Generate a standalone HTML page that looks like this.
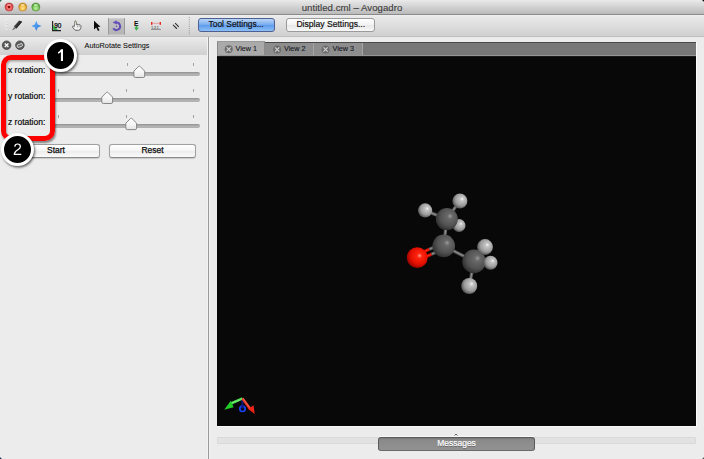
<!DOCTYPE html>
<html><head><meta charset="utf-8">
<style>
*{margin:0;padding:0;box-sizing:border-box}
html,body{width:704px;height:459px;overflow:hidden;background:#ececec;font-family:"Liberation Sans",sans-serif}
.a{position:absolute}
svg{position:absolute;overflow:visible}
#title{left:0;top:0;width:704px;height:15px;background:linear-gradient(#ececec 0,#e6e6e6 1px,#bababa 14px);border-bottom:1px solid #8a8a8a}
#ttxt{left:0;top:2px;width:704px;text-align:center;font-size:9.6px;color:#3e3e3e;line-height:11px;letter-spacing:.05px;-webkit-text-stroke:.15px #3e3e3e}
.tl{top:3px;width:9px;height:9px;border-radius:50%}
#toolbar{left:0;top:15px;width:704px;height:22px;background:linear-gradient(#f2f2f2 0,#eaeaea 1px,#d0d0d0 21px);border-bottom:1px solid #bfbfbf}
.btn{font-size:9.2px;text-align:center;line-height:11px;border-radius:3px;-webkit-text-stroke:.2px #111}
.btn span{display:inline-block;transform:scaleX(.915)}
#toolset{left:198px;top:18px;width:77px;height:14px;border:1px solid #4e5f91;background:linear-gradient(#b9d5f6,#76aaee 50%,#5d9bec 51%,#8cc0f5);color:#111}
#dispset{left:286px;top:18px;width:89px;height:14px;border:1px solid #9a9a9a;background:linear-gradient(#ffffff,#f2f2f2 50%,#e8e8e8 51%,#f8f8f8);color:#111}
#left{left:0;top:37px;width:208px;height:422px;background:#ececec}
#phead{left:0;top:37px;width:208px;height:18px;background:linear-gradient(#ebebeb,#d0d0d0)}
#phtxt{left:22px;top:41px;width:190px;text-align:center;font-size:7.3px;color:#0a0a0a;line-height:9px;-webkit-text-stroke:.05px #0a0a0a}
#vsep{left:207px;top:37px;width:3px;height:422px;background:linear-gradient(90deg,#f3f3f3 0 1px,#999 1px 2px,#f3f3f3 2px)}
.lbl{left:8px;font-size:8.5px;color:#0a0a0a;line-height:10px;-webkit-text-stroke:.2px #0a0a0a}
.groove{left:53px;width:147px;height:4px;border-radius:2px;background:linear-gradient(#8c8c8c,#a4a4a4 1px,#acacac 2px,#bababa 3px,#a8a8a8)}
.tick{width:1px;height:3px;background:#9a9a9a}
.pbtn{height:14px;border:1px solid #a0a0a0;border-bottom-color:#8a8a8a;border-radius:3px;background:linear-gradient(#ffffff,#f4f4f4 50%,#ececec 51%,#fafafa);font-size:8.5px;line-height:10px;text-align:center;color:#0a0a0a;-webkit-text-stroke:.25px #0a0a0a;box-shadow:0 .5px 1px rgba(0,0,0,.15)}
#tabbar{left:217px;top:42px;width:479px;height:14px;background:#777;border-top:1px solid #4a4a4a;border-bottom:1px solid #959595}
.tab{top:43px;height:12px;font-size:7.2px;line-height:12px;color:#121420;border-left:1px solid #9a9a9a;-webkit-text-stroke:.1px #121420}
.tabx{position:absolute;top:2.5px;width:8px;height:8px;border-radius:50%;background:#7a7a7a}
.tabx:before,.tabx:after{content:"";position:absolute;left:3.5px;top:1.5px;width:1px;height:5px;background:#e6e6e6;transform:rotate(45deg)}
.tabx:after{transform:rotate(-45deg)}
.tabt{position:absolute;top:0}
#view{left:217px;top:56px;width:479px;height:370px;background:#080808;border-top:1px solid #1a1a1a}
#vwl{left:217px;top:426px;width:480px;height:1px;background:#f8f8f8}
#vwr{left:696px;top:42px;width:1px;height:385px;background:#fbfbfb}
#msgtrack{left:217px;top:437px;width:479px;height:7px;background:#e2e2e2;border:1px solid #d9d9d9;border-radius:1px}
#msgbtn{left:378px;top:437px;width:157px;height:14px;border:1px solid #5a5a5a;border-bottom-color:#6a6a6a;border-radius:3px;background:linear-gradient(#7a7a7a,#8a8a8a 2px,#929292);color:#fff;font-size:8.5px;line-height:10.5px;text-align:center;-webkit-text-stroke:.2px #fff;text-shadow:0 .6px .6px rgba(0,0,0,.35);box-shadow:0 -1px 0 rgba(255,255,255,.6)}
.badge{width:33px;height:33px;border-radius:50%;background:#000;border:3px solid #fff;box-shadow:1px 1.5px 2.5px rgba(0,0,0,.6)}
#redrect{left:1px;top:55px;width:54px;height:86px;border:5px solid #f00;border-radius:10px;box-shadow:1px 1.5px 2px rgba(0,0,0,.45),inset 1px 1.5px 2px rgba(0,0,0,.3)}
</style></head><body>
<div id="title" class="a"></div>
<div id="ttxt" class="a">untitled.cml – Avogadro</div>
<svg width="50" height="15" style="left:0;top:0">
  <defs>
    <radialGradient id="tlr" cx=".5" cy=".6" r=".55"><stop offset="0" stop-color="#ff9a9a"/><stop offset=".6" stop-color="#f25a5a"/><stop offset="1" stop-color="#c22a2a"/></radialGradient>
    <radialGradient id="tly" cx=".5" cy=".65" r=".55"><stop offset="0" stop-color="#ffe58f"/><stop offset=".6" stop-color="#f3b94a"/><stop offset="1" stop-color="#c98a1e"/></radialGradient>
    <radialGradient id="tlg" cx=".5" cy=".65" r=".55"><stop offset="0" stop-color="#bdf0a4"/><stop offset=".6" stop-color="#86cc62"/><stop offset="1" stop-color="#4e9a34"/></radialGradient>
  </defs>
  <circle cx="9.1" cy="7.1" r="4" fill="url(#tlr)" stroke="#b03838" stroke-width=".6"/>
  <circle cx="9.1" cy="7.1" r="1.3" fill="#8a0a0a"/>
  <ellipse cx="9.1" cy="4.9" rx="2.2" ry=".9" fill="#ffd0d0" opacity=".6"/>
  <circle cx="22.7" cy="7.1" r="4" fill="url(#tly)" stroke="#b98020" stroke-width=".6"/>
  <ellipse cx="22.7" cy="4.9" rx="2.2" ry=".9" fill="#fff6c8" opacity=".7"/>
  <circle cx="35.8" cy="7.1" r="4" fill="url(#tlg)" stroke="#4a8e34" stroke-width=".6"/>
  <ellipse cx="35.8" cy="4.9" rx="2.2" ry=".9" fill="#e4ffd8" opacity=".7"/>
</svg>

<div id="toolbar" class="a"></div>
<!-- toolbar icons -->
<svg width="704" height="37" style="left:0;top:0">
  <defs>
    <linearGradient id="selbg" x1="0" y1="0" x2="0" y2="1"><stop offset="0" stop-color="#c4c4c4"/><stop offset="1" stop-color="#b4b4b4"/></linearGradient>
  </defs>
  <!-- grip -->
  <g stroke="#f6f6f6" stroke-width="1.2" opacity=".9">
    <path d="M5.5,19.5 l2,1.5 M5.5,22.5 l2,1.5 M5.5,25.5 l2,1.5 M5.5,28.5 l2,1.5"/>
  </g>
  <g stroke="#c8c8c8" stroke-width=".8" opacity=".7">
    <path d="M6,20.5 l2,1.5 M6,23.5 l2,1.5 M6,26.5 l2,1.5 M6,29.5 l2,1.5"/>
  </g>
  <!-- pencil -->
  <path d="M19.1,20.6 L22.1,21.8 L16.4,28.6 L13.9,26.5 Z" fill="#3c3c3c"/>
  <path d="M20.2,21 L22.1,21.8 L16.4,28.6 L15.4,27.8 Z" fill="#2a2a2a"/>
  <path d="M14.1,27 L15.9,28.4 L12,30.6 Z" fill="#6e6e6e"/>
  <!-- blue star -->
  <defs><linearGradient id="stg" x1="0" y1="0" x2="1" y2="1"><stop offset="0" stop-color="#6cb8ff"/><stop offset="1" stop-color="#2474d8"/></linearGradient></defs>
  <path d="M36.3,20.8 L37.8,24.5 L41.5,26 L37.8,27.5 L36.3,30.9 L34.8,27.5 L31.3,26 L34.8,24.5 Z" fill="url(#stg)"/>
  <!-- 90 angle -->
  <path d="M52.6,21 V30.6 H61" stroke="#1f1f1f" stroke-width="1.1" fill="none"/>
  <path d="M53.2,24.8 L58,30 H53.2 Z" fill="#3fae4a"/>
  <text x="54.3" y="28.2" font-size="6.4" font-family="Liberation Sans" fill="#0a0a0a" stroke="#0a0a0a" stroke-width=".25">90</text>
  <!-- hand -->
  <path d="M74.6,25 V21.8 Q74.6,20.9 75.4,20.9 Q76.2,20.9 76.2,21.8 V24.3 Q78.5,24.2 80.3,25 Q81.2,25.5 81,26.8 L80.6,28.6 Q80.2,30.3 78.4,30.3 H76 Q74.8,30.3 74.2,29.3 L72.6,27.2 Q72.2,26.4 72.9,26.1 Q73.6,25.9 74.2,26.6 Z" fill="#efefef" stroke="#4a4a4a" stroke-width=".8"/>
  <path d="M77.4,25.3 V27.2 M79.1,25.4 V27.2" stroke="#7a7a7a" stroke-width=".6"/>
  <path d="M75.1,21.6 V24.6" stroke="#f8f4c8" stroke-width=".7"/>
  <!-- arrow -->
  <path d="M94,20.7 L94,29.5 L96.2,27.5 L98,31 L99.5,30.3 L97.8,26.9 L100.5,26.7 Z" fill="#0d0d0d"/>
  <!-- selected rotate button -->
  <rect x="108" y="18.3" width="17" height="16.2" fill="url(#selbg)"/>
  <path d="M108.5,18.3 V34.6 M124.5,18.3 V34.6" stroke="#9a9a9a" stroke-width="1"/>
  <path d="M115.76,22.66 A3.7,3.7 0 1 1 113.2,28.15" stroke="#6650b8" stroke-width="2" fill="none"/>
  <path d="M112.6,22.4 L116.6,20.3 L116.6,24.5 Z" fill="#6650b8"/>
  <circle cx="116.4" cy="26.3" r=".7" fill="#6650b8"/>
  <!-- E icon -->
  <text x="133.9" y="25.7" font-size="6.7" font-weight="bold" font-family="Liberation Sans" fill="#0a0a0a">E</text>
  <path d="M135.7,26 H137.3 V27.6 H138.9 L136.5,30.8 L134,27.6 H135.7 Z" fill="#3cb050"/>
  <!-- measure -->
  <path d="M152.3,23.4 H159.8" stroke="#e86a6a" stroke-width=".8" stroke-dasharray="1,.5"/>
  <rect x="151" y="22" width="1.4" height="2.8" fill="#e8261c"/><rect x="159.6" y="22" width="1.4" height="2.8" fill="#e8261c"/>
  <rect x="151" y="29" width="10" height=".9" fill="#8a8a8a"/>
  <text x="151.3" y="28.6" font-size="3.3" font-weight="bold" font-family="Liberation Sans" fill="#606060">1.2.1.</text>
  <!-- slashes -->
  <path d="M175.4,23.3 L178.5,26.6 M173.3,25.2 L176.6,28.5" stroke="#333" stroke-width="1.1" stroke-linecap="round"/>
  <!-- dotted separator -->
  <path d="M189.3,17 V35" stroke="#9a9a9a" stroke-width="1" stroke-dasharray="1,1.2"/>
</svg>
<div id="toolset" class="a btn"><span>Tool Settings...</span></div>
<div id="dispset" class="a btn"><span style="transform:scaleX(.935)">Display Settings...</span></div>

<div id="left" class="a"></div>
<div id="phead" class="a"></div>
<div id="phtxt" class="a">AutoRotate Settings</div>
<svg width="30" height="20" style="left:0;top:37px">
  <circle cx="6.6" cy="8.2" r="4.3" fill="#5a5a5a" stroke="#3c3c3c" stroke-width=".7"/>
  <path d="M4.8,6.4 L8.4,10 M8.4,6.4 L4.8,10" stroke="#f6f6f6" stroke-width="1.4"/>
  <circle cx="19.9" cy="8.2" r="4.3" fill="#5a5a5a" stroke="#3c3c3c" stroke-width=".7"/>
  <path d="M17.3,8.2 L21,6.6 Q22,6.3 22.3,7.2 L22.5,8 Q22.7,8.8 21.9,9.2 L18.4,10.4 Q17.6,10.6 17.4,9.8 Z" fill="#6a6a6a" stroke="#f2f2f2" stroke-width=".8"/>
</svg>
<div id="vsep" class="a"></div>

<div class="a lbl" style="top:65px">x rotation:</div>
<div class="a lbl" style="top:91px">y rotation:</div>
<div class="a lbl" style="top:117px">z rotation:</div>

<div class="a groove" style="top:72px"></div>
<div class="a groove" style="top:98px"></div>
<div class="a groove" style="top:124px"></div>
<svg width="210" height="140" style="left:0;top:0">
  <defs>
    <linearGradient id="hg" x1="0" y1="0" x2="0" y2="1"><stop offset="0" stop-color="#ffffff"/><stop offset=".6" stop-color="#f4f4f4"/><stop offset="1" stop-color="#e4e4e4"/></linearGradient>
  </defs>
  <g fill="#a2a2a2">
    <rect x="58" y="63" width="1" height="3"/><rect x="127" y="63" width="1" height="3"/><rect x="193" y="63" width="1" height="3"/>
    <rect x="58" y="89" width="1" height="3"/><rect x="126" y="89" width="1" height="3"/><rect x="193" y="89" width="1" height="3"/>
    <rect x="58" y="115" width="1" height="3"/><rect x="126" y="115" width="1" height="3"/><rect x="193" y="115" width="1" height="3"/>
  </g>
  <g fill="url(#hg)" stroke="#7c7c7c" stroke-width=".9">
    <path transform="translate(133.9,65.3)" d="M0,5.8 L4.7,1.1 Q5.4,.5 6.1,1.1 L10.8,5.8 V10.7 Q10.8,12.2 9.3,12.2 H1.5 Q0,12.2 0,10.7 Z"/>
    <path transform="translate(101.8,91.3)" d="M0,5.8 L4.7,1.1 Q5.4,.5 6.1,1.1 L10.8,5.8 V10.7 Q10.8,12.2 9.3,12.2 H1.5 Q0,12.2 0,10.7 Z"/>
    <path transform="translate(125.8,117.4)" d="M0,5.8 L4.7,1.1 Q5.4,.5 6.1,1.1 L10.8,5.8 V10.7 Q10.8,12.2 9.3,12.2 H1.5 Q0,12.2 0,10.7 Z"/>
  </g>
</svg>

<div class="a pbtn" style="left:12px;top:144px;width:88px">Start</div>
<div class="a pbtn" style="left:109px;top:144px;width:87px">Reset</div>

<div id="tabbar" class="a"></div>
<div class="a tab" style="left:217px;top:41px;height:14px;line-height:14px;width:48px;background:#aaaaaa;border:1px solid #8a8a8a;border-top-color:#9a9a9a;border-bottom:0"><span class="tabt" style="left:17.5px">View 1</span></div>
<div class="a tab" style="left:265px;width:49px;background:#8d8d8d;border-left:0;border-right:1px solid #a5a5a5"><span class="tabt" style="left:19px">View 2</span></div>
<div class="a tab" style="left:314px;width:49px;background:#8d8d8d;border-left:0;border-right:1px solid #a5a5a5"><span class="tabt" style="left:18.5px">View 3</span></div>
<svg width="704" height="60" style="left:0;top:0">
  <g fill="#6c6c6c"><circle cx="228.7" cy="49.2" r="4"/><circle cx="277.2" cy="49.5" r="4"/><circle cx="325.6" cy="49.5" r="4"/></g>
  <g stroke="#d0d0d0" stroke-width="1.2"><path d="M226.6,47.1 l4.2,4.2 m0,-4.2 l-4.2,4.2"/><path d="M275.1,47.4 l4.2,4.2 m0,-4.2 l-4.2,4.2"/><path d="M323.5,47.4 l4.2,4.2 m0,-4.2 l-4.2,4.2"/></g>
</svg>
<div id="view" class="a"></div><div id="vwl" class="a"></div><div id="vwr" class="a"></div>

<!-- molecule -->
<svg width="704" height="459" style="left:0;top:0">
  <defs>
    <radialGradient id="gC" cx=".58" cy=".42" r=".62" fx=".66" fy=".36"><stop offset="0" stop-color="#9a9a9a"/><stop offset=".2" stop-color="#686868"/><stop offset=".65" stop-color="#525252"/><stop offset="1" stop-color="#2c2c2c"/></radialGradient>
    <radialGradient id="gH" cx=".58" cy=".42" r=".62" fx=".66" fy=".36"><stop offset="0" stop-color="#f6f6f6"/><stop offset=".2" stop-color="#c4c4c4"/><stop offset=".65" stop-color="#9c9c9c"/><stop offset="1" stop-color="#4c4c4c"/></radialGradient>
    <radialGradient id="gO" cx=".58" cy=".42" r=".62" fx=".62" fy=".4"><stop offset="0" stop-color="#ff9a8a"/><stop offset=".2" stop-color="#ff2410"/><stop offset=".65" stop-color="#e41000"/><stop offset="1" stop-color="#900000"/></radialGradient>
    <linearGradient id="b0" gradientUnits="userSpaceOnUse" x1="448.18" y1="220.10" x2="445.42" y2="218.10"><stop offset="0" stop-color="#3c3c3c"/><stop offset=".55" stop-color="#8e8e8e"/><stop offset="1" stop-color="#444"/></linearGradient>
    <linearGradient id="b1" gradientUnits="userSpaceOnUse" x1="447.43" y1="217.52" x2="446.17" y2="220.68"><stop offset="0" stop-color="#3c3c3c"/><stop offset=".55" stop-color="#8e8e8e"/><stop offset="1" stop-color="#444"/></linearGradient>
    <linearGradient id="b2" gradientUnits="userSpaceOnUse" x1="446.01" y1="220.61" x2="447.59" y2="217.59"><stop offset="0" stop-color="#3c3c3c"/><stop offset=".55" stop-color="#8e8e8e"/><stop offset="1" stop-color="#444"/></linearGradient>
    <linearGradient id="b3" gradientUnits="userSpaceOnUse" x1="445.11" y1="218.90" x2="448.49" y2="219.30"><stop offset="0" stop-color="#3c3c3c"/><stop offset=".55" stop-color="#8e8e8e"/><stop offset="1" stop-color="#444"/></linearGradient>
    <linearGradient id="b4" gradientUnits="userSpaceOnUse" x1="442.93" y1="247.41" x2="444.47" y2="244.39"><stop offset="0" stop-color="#3c3c3c"/><stop offset=".55" stop-color="#8e8e8e"/><stop offset="1" stop-color="#444"/></linearGradient>
    <linearGradient id="b5" gradientUnits="userSpaceOnUse" x1="475.35" y1="262.43" x2="472.65" y2="260.37"><stop offset="0" stop-color="#3c3c3c"/><stop offset=".55" stop-color="#8e8e8e"/><stop offset="1" stop-color="#444"/></linearGradient>
    <linearGradient id="b6" gradientUnits="userSpaceOnUse" x1="473.87" y1="263.09" x2="474.13" y2="259.71"><stop offset="0" stop-color="#3c3c3c"/><stop offset=".55" stop-color="#8e8e8e"/><stop offset="1" stop-color="#444"/></linearGradient>
    <linearGradient id="b7" gradientUnits="userSpaceOnUse" x1="472.33" y1="261.07" x2="475.67" y2="261.73"><stop offset="0" stop-color="#3c3c3c"/><stop offset=".55" stop-color="#8e8e8e"/><stop offset="1" stop-color="#444"/></linearGradient>
    <linearGradient id="b8" gradientUnits="userSpaceOnUse" x1="418.97" y1="261.67" x2="417.63" y2="258.66"><stop offset="0" stop-color="#900"/><stop offset=".55" stop-color="#ff2a10"/><stop offset="1" stop-color="#a00"/></linearGradient>
    <linearGradient id="b9" gradientUnits="userSpaceOnUse" x1="432.22" y1="255.77" x2="430.88" y2="252.76"><stop offset="0" stop-color="#3c3c3c"/><stop offset=".55" stop-color="#8e8e8e"/><stop offset="1" stop-color="#444"/></linearGradient>
    <linearGradient id="b10" gradientUnits="userSpaceOnUse" x1="416.77" y1="256.74" x2="415.43" y2="253.73"><stop offset="0" stop-color="#900"/><stop offset=".55" stop-color="#ff2a10"/><stop offset="1" stop-color="#a00"/></linearGradient>
    <linearGradient id="b11" gradientUnits="userSpaceOnUse" x1="430.02" y1="250.84" x2="428.68" y2="247.83"><stop offset="0" stop-color="#3c3c3c"/><stop offset=".55" stop-color="#8e8e8e"/><stop offset="1" stop-color="#444"/></linearGradient>
  </defs>
  <line x1="446.80" y1="219.10" x2="459.90" y2="201.00" stroke="url(#b0)" stroke-width="3.4"/>
  <line x1="446.80" y1="219.10" x2="425.10" y2="210.40" stroke="url(#b1)" stroke-width="3.4"/>
  <line x1="446.80" y1="219.10" x2="459.00" y2="225.50" stroke="url(#b2)" stroke-width="3.4"/>
  <line x1="446.80" y1="219.10" x2="443.70" y2="245.90" stroke="url(#b3)" stroke-width="3.4"/>
  <line x1="443.70" y1="245.90" x2="474.00" y2="261.40" stroke="url(#b4)" stroke-width="3.4"/>
  <line x1="474.00" y1="261.40" x2="485.00" y2="247.00" stroke="url(#b5)" stroke-width="3.4"/>
  <line x1="474.00" y1="261.40" x2="490.50" y2="262.70" stroke="url(#b6)" stroke-width="3.4"/>
  <line x1="474.00" y1="261.40" x2="469.20" y2="286.00" stroke="url(#b7)" stroke-width="3.4"/>
  <line x1="418.30" y1="260.17" x2="431.55" y2="254.27" stroke="url(#b8)" stroke-width="3.3"/>
  <line x1="431.55" y1="254.27" x2="444.80" y2="248.37" stroke="url(#b9)" stroke-width="3.3"/>
  <line x1="416.10" y1="255.23" x2="429.35" y2="249.33" stroke="url(#b10)" stroke-width="3.3"/>
  <line x1="429.35" y1="249.33" x2="442.60" y2="243.43" stroke="url(#b11)" stroke-width="3.3"/>
  <circle cx="459.0" cy="225.5" r="6.5" fill="url(#gH)"/>
  <circle cx="459.9" cy="201.0" r="7.5" fill="url(#gH)"/>
  <circle cx="425.1" cy="210.4" r="7.1" fill="url(#gH)"/>
  <circle cx="446.8" cy="219.1" r="11.0" fill="url(#gC)"/>
  <circle cx="443.7" cy="245.9" r="11.3" fill="url(#gC)"/>
  <circle cx="417.2" cy="257.7" r="10.4" fill="url(#gO)"/>
  <circle cx="474.0" cy="261.4" r="11.8" fill="url(#gC)"/>
  <circle cx="490.5" cy="262.7" r="7.0" fill="url(#gH)"/>
  <circle cx="485.0" cy="247.0" r="7.9" fill="url(#gH)"/>
  <circle cx="469.2" cy="286.0" r="8.0" fill="url(#gH)"/>
  <!-- axes -->
  <defs>
    <linearGradient id="axg" gradientUnits="userSpaceOnUse" x1="236" y1="398" x2="238" y2="404"><stop offset="0" stop-color="#18b020"/><stop offset=".5" stop-color="#6cf070"/><stop offset="1" stop-color="#14a01a"/></linearGradient>
    <linearGradient id="axr" gradientUnits="userSpaceOnUse" x1="249" y1="402" x2="245" y2="405"><stop offset="0" stop-color="#c01010"/><stop offset=".5" stop-color="#ff5a40"/><stop offset="1" stop-color="#d01a10"/></linearGradient>
  </defs>
  <circle cx="242.5" cy="408.8" r="2.7" fill="none" stroke="#1a40f4" stroke-width="1.7"/>
  <path d="M242.5,399 V408.6" stroke="#0c1a80" stroke-width="2.1"/>
  <path d="M242.5,398.4 L230,404" stroke="url(#axg)" stroke-width="2.6"/>
  <path d="M230.8,400.8 L224.2,409.7 L233.6,407.2 Z" fill="#22cc28"/>
  <path d="M242.5,398.4 L250.5,409.5" stroke="url(#axr)" stroke-width="2.6"/>
  <path d="M247.6,408.6 L254.7,414 L253.6,405.6 Z" fill="#ee2418"/>
</svg>

<div id="msgtrack" class="a"></div>
<div id="msgbtn" class="a">Messages</div>
<svg width="10" height="6" style="left:451px;top:431px"><path d="M3.5,4.5 L5,3 L6.5,4.5" stroke="#555" stroke-width=".9" fill="none"/></svg>

<div id="redrect" class="a"></div>
<div class="a badge" style="left:44px;top:39px"></div>
<div class="a badge" style="left:1px;top:133px"></div>
<svg width="704" height="200" style="left:0;top:0">
  <path d="M60.9,49.3 H63 V61 H60.9 V52 Q59.8,53.2 58,53.8 V52.2 Q60,51.2 60.9,49.3 Z" fill="#fff"/>
  <path d="M14.2,146.6 Q14.3,143.4 17.6,143.4 Q21,143.4 21,146.4 Q21,148.4 18.5,150 Q15.6,151.9 15.1,153.7 H21.3 V155 H13.6 Q13.7,151.5 17.4,149.3 Q19.7,147.9 19.7,146.4 Q19.7,144.6 17.6,144.6 Q15.6,144.6 15.5,146.8 Z" fill="#fff"/>
</svg>
<svg width="704" height="459" style="left:0;top:0">
  <rect x="0" y="0" width="1" height="1" fill="#1d6b5a"/><rect x="1" y="0" width="1" height="1" fill="#8fb3aa"/><rect x="0" y="1" width="1" height="1" fill="#7aa69a"/>
  <rect x="703" y="0" width="1" height="1" fill="#111"/><rect x="702" y="0" width="1" height="1" fill="#777"/><rect x="703" y="1" width="1" height="1" fill="#888"/>
  <rect x="0" y="458" width="1" height="1" fill="#1a3350"/><rect x="1" y="458" width="1" height="1" fill="#8a98a8"/><rect x="0" y="457" width="1" height="1" fill="#8a98a8"/>
  <rect x="703" y="458" width="1" height="1" fill="#555"/><rect x="702" y="458" width="1" height="1" fill="#aaa"/><rect x="703" y="457" width="1" height="1" fill="#aaa"/>
</svg>
</body></html>
